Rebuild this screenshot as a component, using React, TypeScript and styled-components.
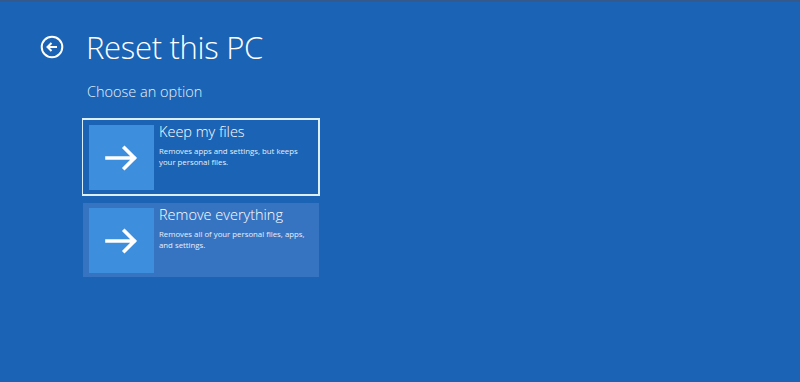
import styled, { createGlobalStyle } from 'styled-components';

const GlobalStyle = createGlobalStyle`
  html, body {
    margin: 0;
    padding: 0;
    background: #1b63b4;
  }
  body {
    font-family: 'Open Sans', 'Noto Sans', sans-serif;
    color: #ffffff;
  }
`;

const Page = styled.div`
  width: 800px;
  height: 382px;
  box-sizing: border-box;
  border-top: 2px solid #34598a;
  background: #1b63b4;
  padding: 25px 0 0 40px;
  overflow: hidden;
`;

const Header = styled.div`
  display: flex;
  align-items: center;
  gap: 22px;
  height: 40px;
`;

const BackButton = styled.div`
  width: 24px;
  height: 24px;
  display: flex;
  align-items: center;
  justify-content: center;
`;

const Title = styled.h1`
  margin: 0;
  font-weight: 300;
  font-size: 31px;
  line-height: 40px;
  letter-spacing: -0.3px;
  color: #ffffff;
`;

const Subtitle = styled.div`
  margin: 15px 0 0 47px;
  font-weight: 300;
  font-size: 14.5px;
  line-height: 20px;
  color: #e8f1fb;
`;

const Options = styled.div`
  display: flex;
  flex-direction: column;
  gap: 5px;
  margin: 16px 0 0 42px;
  width: 238px;
`;

const Option = styled.div<{ $selected?: boolean; $hover?: boolean }>`
  display: flex;
  gap: 5px;
  box-sizing: border-box;
  height: 78px;
  padding: 5px 5px 5px 6px;
  border: 2px solid ${(p) => (p.$selected ? '#dcefff' : 'transparent')};
  border-width: ${(p) => (p.$selected ? '2px 2px 2px 1px' : '2px 1px 2px 1px')};
  background: ${(p) => (p.$hover ? '#3674c2' : 'transparent')};
  background-clip: padding-box;
`;

const Tile = styled.div`
  flex: none;
  width: 65px;
  height: 65px;
  background: #3d8fde;
  display: flex;
  align-items: center;
  justify-content: center;
`;

const OptionText = styled.div`
  display: flex;
  flex-direction: column;
  white-space: nowrap;
`;

const OptionTitle = styled.div`
  font-weight: 300;
  font-size: 14.5px;
  line-height: 18px;
  color: #ffffff;
  margin-top: -2px;
`;

const OptionDesc = styled.div`
  font-size: 7.8px;
  line-height: 11px;
  color: #e6effa;
  margin-top: 5px;
`;

const Arrow = () => (
  <svg width="34" height="26" viewBox="0 0 34 26">
    <path
      d="M2 13 H29 M19.5 3 L29.5 13 L19.5 23"
      fill="none"
      stroke="#ffffff"
      strokeWidth="3.6"
      strokeLinecap="square"
    />
  </svg>
);

const BackIcon = () => (
  <svg width="24" height="24" viewBox="0 0 24 24">
    <circle cx="12" cy="12" r="10.3" fill="none" stroke="#ffffff" strokeWidth="2" />
    <path d="M17 12 H7.5 M11.5 8 L7.5 12 L11.5 16" fill="none" stroke="#ffffff" strokeWidth="2" />
  </svg>
);

const options = [
  {
    title: 'Keep my files',
    desc: ['Removes apps and settings, but keeps', 'your personal files.'],
    selected: true,
  },
  {
    title: 'Remove everything',
    desc: ['Removes all of your personal files, apps,', 'and settings.'],
    hover: true,
  },
];

export default function App() {
  return (
    <>
      <GlobalStyle />
      <Page>
        <Header>
          <BackButton>
            <BackIcon />
          </BackButton>
          <Title>Reset this PC</Title>
        </Header>
        <Subtitle>Choose an option</Subtitle>
        <Options>
          {options.map((o) => (
            <Option key={o.title} $selected={o.selected} $hover={o.hover}>
              <Tile>
                <Arrow />
              </Tile>
              <OptionText>
                <OptionTitle>{o.title}</OptionTitle>
                <OptionDesc>
                  {o.desc.map((l) => (
                    <div key={l}>{l}</div>
                  ))}
                </OptionDesc>
              </OptionText>
            </Option>
          ))}
        </Options>
      </Page>
    </>
  );
}
